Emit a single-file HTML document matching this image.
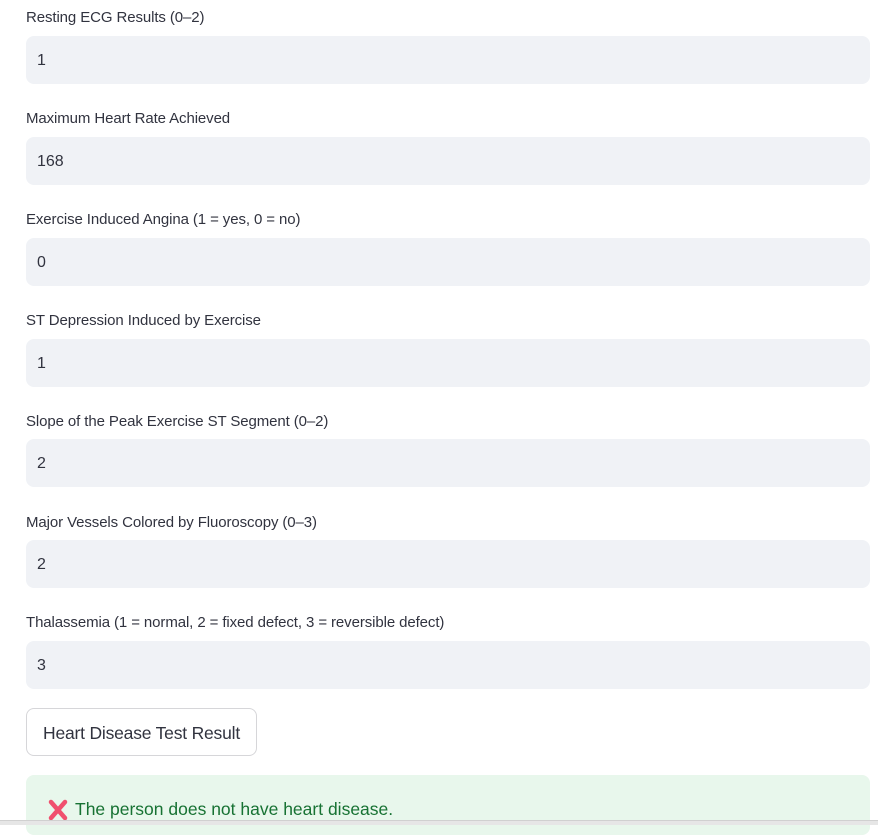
<!DOCTYPE html>
<html><head><style>
body{margin:0;width:878px;height:824px;overflow:hidden;background:#fff;font-family:"Liberation Sans",sans-serif;position:relative}
.l{position:absolute;left:26px;font-size:15px;color:#31333f;line-height:20px;letter-spacing:-0.1px}
.i{position:absolute;left:26px;width:844px;height:48px;background:#f0f2f6;border-radius:8px;font-size:16px;color:#31333f;line-height:50px;box-sizing:border-box;padding-left:11px}
.btn{position:absolute;left:26px;top:708px;width:231px;height:48px;border:1px solid #d6d6d9;border-radius:8px;box-sizing:border-box;font-size:17.5px;color:#31333f;line-height:48px;text-align:center;letter-spacing:-0.2px}
.al{position:absolute;left:26px;top:775px;width:844px;height:60px;background:#e8f7ec;border-radius:8px;color:#177233;font-size:17.5px}
.bar{position:absolute;left:0;top:820px;width:878px;height:4px;background:#e6e6e6;border-top:1px solid #d0d0d0}
</style></head><body>
<div class="l" style="top:8px">Resting ECG Results (0–2)</div><div class="i" style="top:36px">1</div>
<div class="l" style="top:109px">Maximum Heart Rate Achieved</div><div class="i" style="top:137px">168</div>
<div class="l" style="top:210px">Exercise Induced Angina (1 = yes, 0 = no)</div><div class="i" style="top:238px">0</div>
<div class="l" style="top:311px">ST Depression Induced by Exercise</div><div class="i" style="top:339px">1</div>
<div class="l" style="top:412px">Slope of the Peak Exercise ST Segment (0–2)</div><div class="i" style="top:439px">2</div>
<div class="l" style="top:513px">Major Vessels Colored by Fluoroscopy (0–3)</div><div class="i" style="top:540px">2</div>
<div class="l" style="top:613px">Thalassemia (1 = normal, 2 = fixed defect, 3 = reversible defect)</div><div class="i" style="top:641px">3</div>
<div class="btn">Heart Disease Test Result</div>
<div class="al"><svg style="position:absolute;left:21px;top:24px" width="22" height="22" viewBox="0 0 22 22"><path d="M4 3L18 19M18 3L4 19" stroke="#f0506e" stroke-width="4.5" stroke-linecap="round"/></svg><span style="position:absolute;left:49px;top:24px">The person does not have heart disease.</span></div>
<div class="bar"></div>
</body></html>
